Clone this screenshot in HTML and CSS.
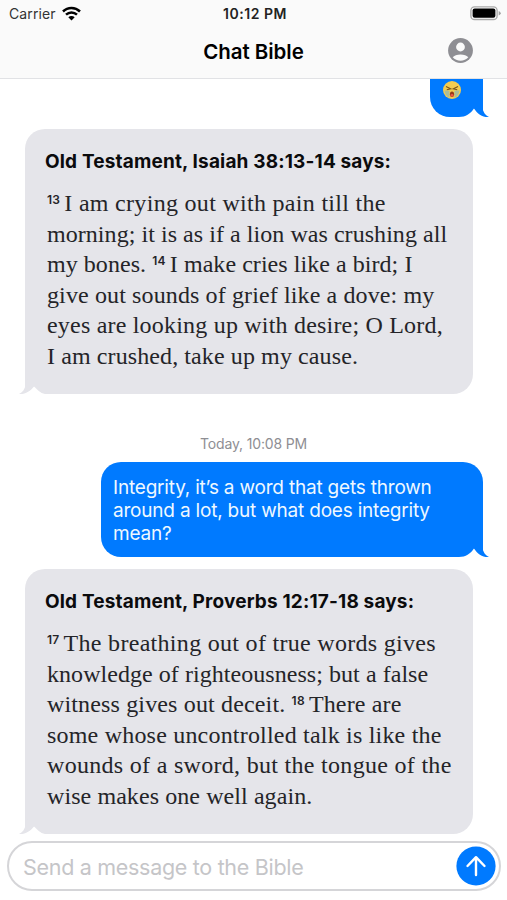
FILE: index.html
```
<!DOCTYPE html>
<html lang="en">
<head>
    <meta charset="UTF-8">
    <meta name="viewport" content="width=device-width, initial-scale=1.0">
    <title>Chat Bible</title>
    <link rel="stylesheet" href="styles.css">
</head>
<body>
    <header class="header">
        <div class="status">
            <div class="carrier">
                <span>Carrier</span>
                <svg width="19" height="15" viewBox="0 0 19 15" fill="none" stroke="#000" stroke-width="2.5">
                    <path d="M1 5.5C5.8 .8 13.2 .8 18 5.5"/>
                    <path d="M4 8.7C7.2 5.7 11.8 5.7 15 8.7"/>
                    <path d="M6.3 11.2C8.2 9.5 10.8 9.5 12.7 11.2L9.5 14.4Z" fill="#000" stroke="none"/>
                </svg>
            </div>
            <div class="time">10:12 PM</div>
            <svg class="battery" width="31" height="15" viewBox="0 0 31 15">
                <rect x=".9" y=".9" width="26.2" height="12.6" rx="3.6" fill="#fff" stroke="#a9a9a9" stroke-width="1.4"/>
                <rect x="2.6" y="2.6" width="22.8" height="9.2" rx="2" fill="#000"/>
                <path d="M28.7 5v4.4q2-.8 2-2.2t-2-2.2z" fill="#a0a0a0"/>
            </svg>
        </div>
        <div class="nav">
            <h1 class="title">Chat Bible</h1>
            <svg class="profile" width="25" height="25" viewBox="0 0 25 25">
                <circle cx="12.5" cy="12.5" r="12.4" fill="#8e8e93"/>
                <circle cx="12.5" cy="9" r="4.4" fill="#fafafa"/>
                <path d="M4.7 19.3C7 15.4 18 15.4 20.3 19.3C16.5 23.8 8.5 23.8 4.7 19.3Z" fill="#fafafa"/>
            </svg>
        </div>
    </header>

    <main class="chat">
        <div class="bubble sent emoji">
            <svg class="face" width="20" height="20" viewBox="0 0 20 20">
                <circle cx="10" cy="10" r="9" fill="#f3cc50"/>
                <path d="M2.5 10.5H7.5V17.8Q3.2 16.2 2.5 10.5ZM12.5 10.5H17.5Q16.8 16.2 12.5 17.8Z" fill="#a9bd9b"/>
                <path d="M4 6.5L8.7 8.8L4.8 9.8M16 6.5L11.3 8.8L15.2 9.8" fill="none" stroke="#76531c" stroke-width="1.1"/>
                <ellipse cx="10" cy="14.2" rx="2.1" ry="2.8" fill="#983d18"/>
                <ellipse cx="10" cy="15.4" rx="1.6" ry="1.4" fill="#ef5742"/>
            </svg>
            <svg class="tail" width="34" height="20" viewBox="0 0 34 20">
                <path class="notch" d="M0 20V17H3C10 17 14 14 18 8.5L34 17V20Z"/>
                <path d="M26.5 0V7.5C27 12 29.5 15.5 33 17C26.5 17.5 21.5 14 18 8.5Z" fill="currentColor"/>
            </svg>
        </div>

        <div class="bubble received">
            <h2>Old Testament, Isaiah 38:13-14 says:</h2>
            <p class="verse isaiah">
                <span class="l1"><sup>13</sup>I am crying out with pain till the</span>
                <span class="l2">morning; it is as if a lion was crushing all</span>
                <span class="l3">my bones. <sup>14</sup>I make cries like a bird; I</span>
                <span class="l4">give out sounds of grief like a dove: my</span>
                <span class="l5">eyes are looking up with desire; O Lord,</span>
                <span class="l6">I am crushed, take up my cause.</span>
            </p>
            <svg class="tail" width="34" height="20" viewBox="0 0 34 20">
                <path class="notch" d="M0 20V17H7C12 16 14 13 18 9.5L34 17V20Z"/>
                <path d="M26.5 0V7.5C27 12 29.5 15.5 33 17C26.5 17.5 21.5 14 18 9.5Z" fill="currentColor"/>
            </svg>
        </div>

        <div class="date">Today, 10:08 PM</div>

        <div class="bubble sent question">
            <p>Integrity, it’s a word that gets thrown<br>around a lot, but what does integrity<br>mean?</p>
            <svg class="tail" width="34" height="20" viewBox="0 0 34 20">
                <path class="notch" d="M0 20V17H3C10 17 14 14 18 8.5L34 17V20Z"/>
                <path d="M26.5 0V7.5C27 12 29.5 15.5 33 17C26.5 17.5 21.5 14 18 8.5Z" fill="currentColor"/>
            </svg>
        </div>

        <div class="bubble received">
            <h2>Old Testament, Proverbs 12:17-18 says:</h2>
            <p class="verse proverbs">
                <span class="l1"><sup>17</sup>The breathing out of true words gives</span>
                <span class="l2">knowledge of righteousness; but a false</span>
                <span class="l3">witness gives out deceit. <sup>18</sup>There are</span>
                <span class="l4">some whose uncontrolled talk is like the</span>
                <span class="l5">wounds of a sword, but the tongue of the</span>
                <span class="l6">wise makes one well again.</span>
            </p>
            <svg class="tail" width="34" height="20" viewBox="0 0 34 20">
                <path class="notch" d="M0 20V17H7C12 16 14 13 18 9.5L34 17V20Z"/>
                <path d="M26.5 0V7.5C27 12 29.5 15.5 33 17C26.5 17.5 21.5 14 18 9.5Z" fill="currentColor"/>
            </svg>
        </div>
    </main>

    <footer class="composer">
        <span class="placeholder">Send a message to the Bible</span>
        <svg width="40" height="40" viewBox="0 0 40 40">
            <circle cx="20" cy="20" r="19.6" fill="#007aff"/>
            <path d="M20 29V11.5M11.5 20L20 11.2L28.5 20" fill="none" stroke="#fff" stroke-width="2.4" stroke-linecap="round" stroke-linejoin="round"/>
        </svg>
    </footer>
</body>
</html>
```
FILE: styles.css
```
* {
    box-sizing: border-box;
}

body {
    margin: 0;
    height: 900px;
    display: flex;
    flex-direction: column;
    overflow: hidden;
    background: #fff;
    color: #000;
    font-family: Inter, "Liberation Sans", sans-serif;
}

h1, h2, p {
    margin: 0;
}

svg {
    display: block;
    flex: none;
}

.header {
    height: 79px;
    flex: none;
    background: #fafafa;
    border-bottom: 1px solid #e1e2e5;
}

.status {
    height: 27px;
    padding: 0 6px 0 9px;
    display: grid;
    grid-template-columns: 1fr auto 1fr;
    align-items: center;
    font-size: 14px;
}

.carrier {
    display: flex;
    align-items: center;
    gap: 6px;
    color: #333;
    letter-spacing: 0.1px;
}

.time {
    font-weight: 600;
    font-size: 14px;
    letter-spacing: 0.55px;
    color: #222;
}

.battery {
    justify-self: end;
}

.nav {
    height: 51px;
    padding: 0 34px;
    display: grid;
    grid-template-columns: 1fr auto 1fr;
    align-items: center;
}

.title {
    grid-column: 2;
    margin-bottom: 2px;
    font-size: 20.5px;
    font-weight: 600;
    line-height: 28px;
    letter-spacing: -0.05px;
}

.profile {
    justify-self: end;
    margin-bottom: 5px;
}

.chat {
    height: 755px;
    flex: none;
    display: flex;
    flex-direction: column;
    align-items: flex-start;
}

.bubble {
    position: relative;
    flex: none;
    border-radius: 20px;
}

.sent {
    align-self: flex-end;
    margin-right: 24px;
    background: #007aff;
    color: #007aff;
    border-bottom-right-radius: 0;
}

.received {
    width: 448px;
    height: 265px;
    margin-left: 25px;
    padding: 20px 0 0 20px;
    background: #e5e5ea;
    color: #e5e5ea;
    border-bottom-left-radius: 0;
}

.tail {
    position: absolute;
    right: -7px;
    bottom: -3px;
}

.received .tail {
    right: auto;
    left: -7px;
    transform: scaleX(-1);
}

.notch {
    fill: #fff;
}

.emoji {
    width: 53px;
    height: 38px;
    margin-bottom: 12px;
    padding: 1px 0 0 12px;
    border-radius: 0 0 0 20px;
}

.received h2 {
    color: #0b0b0d;
    font-size: 19px;
    font-weight: 700;
    line-height: 25px;
    letter-spacing: 0.16px;
    white-space: nowrap;
}

/* verse lines */
.verse {
    padding: 14px 0 0 2px;
    color: #242428;
    font-family: "Liberation Serif", serif;
    font-size: 24px;
    line-height: 30.6px;
}

.verse span {
    display: block;
    height: 30.6px;
    white-space: nowrap;
}

.verse sup {
    display: inline-block;
    margin-right: 4px;
    font-family: Inter, sans-serif;
    font-size: 12px;
    font-weight: 600;
    line-height: 12px;
    letter-spacing: 0.3px;
    vertical-align: 7px;
}

.isaiah .l1 {
    letter-spacing: 0.3px;
}

.isaiah .l2 {
    letter-spacing: 0.05px;
}

.isaiah .l3 {
    letter-spacing: 0.05px;
}

.isaiah .l4 {
    letter-spacing: 0.12px;
}

.isaiah .l5 {
    letter-spacing: 0.2px;
}

.isaiah .l6 {
    letter-spacing: 0.1px;
}

.proverbs .l1 {
    letter-spacing: 0.3px;
}

.proverbs .l2 {
    letter-spacing: 0.05px;
}

.proverbs .l3 {
    letter-spacing: 0.15px;
}

.proverbs .l4 {
    letter-spacing: 0.2px;
}

.proverbs .l5 {
    letter-spacing: 0.3px;
}

.proverbs .l6 {
    letter-spacing: 0.08px;
}

.date {
    align-self: center;
    height: 68px;
    padding-top: 40px;
    color: #8e8e93;
    font-size: 14px;
    line-height: 19px;
    letter-spacing: -0.15px;
}

.question {
    width: 382px;
    height: 95px;
    margin-bottom: 12px;
    padding: 14px 0 0 12px;
}

.question p {
    color: #eef8ff;
    font-size: 19px;
    line-height: 23.2px;
    letter-spacing: -0.2px;
    white-space: nowrap;
}

.composer {
    width: 494px;
    height: 50px;
    margin: 7px 0 0 7px;
    padding: 0 3px 0 14px;
    flex: none;
    display: flex;
    align-items: center;
    justify-content: space-between;
    border: 2px solid #d5d5d8;
    border-radius: 25px;
    background: #fff;
}

.placeholder {
    padding-top: 1px;
    color: #c5c5c8;
    font-size: 21.5px;
    letter-spacing: -0.3px;
}
```
